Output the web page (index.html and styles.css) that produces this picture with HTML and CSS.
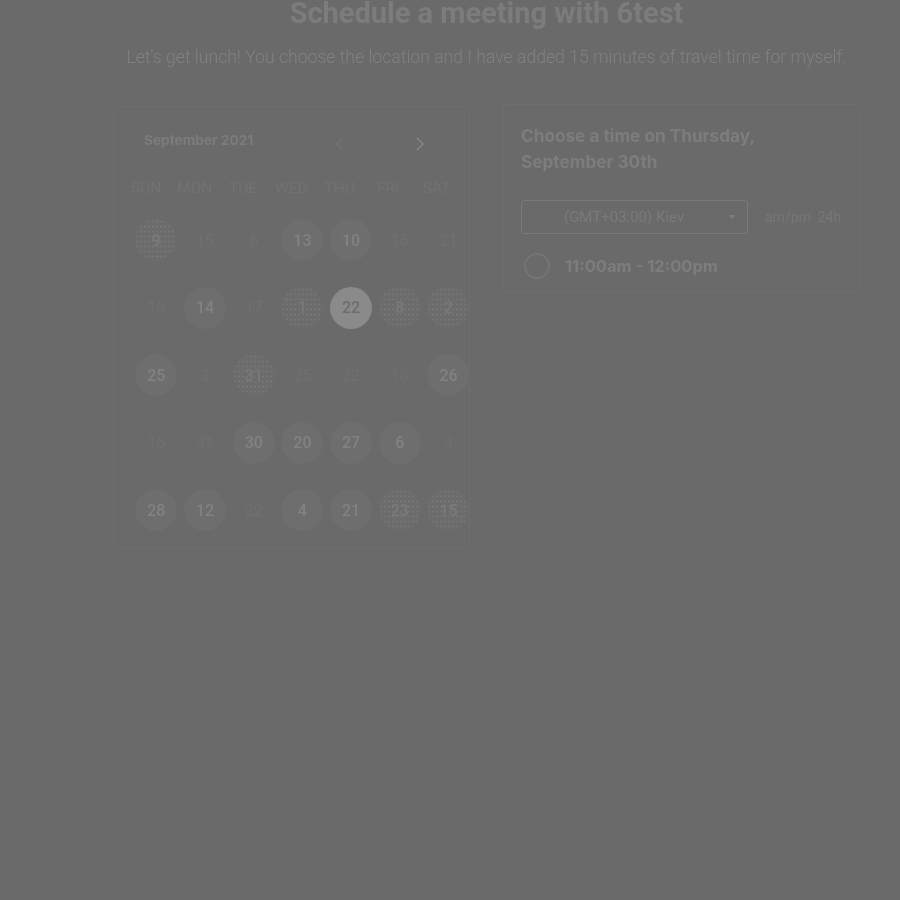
FILE: index.html
```html
<!DOCTYPE html>
<html>
<head>
<meta charset="utf-8">
<link rel="stylesheet" href="styles.css">
</head>
<body>
<main class="page">
  <h1 class="title">Schedule a meeting with 6test</h1>
  <p class="subtitle">Let's get lunch! You choose the location and I have added 15 minutes of travel time for myself.</p>
  <div class="cards">
    <section class="card calendar">
      <div class="cal-head">
        <span class="month">September 2021</span>
        <span class="nav">
          <svg class="chev prev" width="12" height="16" viewBox="0 0 12 16"><path d="M9 2 L3 8 L9 14" fill="none" stroke="currentColor" stroke-width="1.6"/></svg>
          <svg class="chev next" width="12" height="16" viewBox="0 0 12 16"><path d="M3 2 L9 8 L3 14" fill="none" stroke="currentColor" stroke-width="1.6"/></svg>
        </span>
      </div>
      <div class="weekdays">
        <span>SUN</span><span>MON</span><span>TUE</span><span>WED</span><span>THU</span><span>FRI</span><span>SAT</span>
      </div>
      <div class="days">
        <span class="d dots">9</span><span class="d off">15</span><span class="d off">6</span><span class="d on">13</span><span class="d on">10</span><span class="d off">16</span><span class="d off">21</span>
        <span class="d off">16</span><span class="d on">14</span><span class="d off">17</span><span class="d dots">1</span><span class="d sel">22</span><span class="d dots">8</span><span class="d dots">2</span>
        <span class="d on">25</span><span class="d off">3</span><span class="d dots">31</span><span class="d off">25</span><span class="d off">22</span><span class="d off">18</span><span class="d on">26</span>
        <span class="d off">16</span><span class="d off">31</span><span class="d on">30</span><span class="d on">20</span><span class="d on">27</span><span class="d on">6</span><span class="d off">3</span>
        <span class="d on">28</span><span class="d on">12</span><span class="d off">22</span><span class="d on">4</span><span class="d on">21</span><span class="d dots">23</span><span class="d dots">15</span>
      </div>
    </section>
    <section class="card times">
      <h2 class="times-title">Choose a time on Thursday,<br>September 30th</h2>
      <div class="times-body">
        <div class="tz-row">
          <div class="select">
            <span class="select-text">(GMT+03:00) Kiev</span>
            <span class="caret"></span>
          </div>
          <span class="fmt">am/pm&nbsp;&nbsp;24h</span>
        </div>
        <label class="slot">
          <span class="radio"></span>
          <span class="slot-text">11:00am - 12:00pm</span>
        </label>
      </div>
    </section>
  </div>
</main>
</body>
</html>
```
FILE: styles.css
```css
html, body {
  margin: 0;
  padding: 0;
  background: #6a6a6a;
}
body {
  font-family: Roboto, "Liberation Sans", sans-serif;
  color: #7e7e7e;
}
.page {
  width: 747px;
  margin-left: 113px;
  filter: blur(0.4px);
}
.title {
  margin: 0;
  font-size: 29px;
  line-height: 27px;
  font-weight: 700;
  text-align: center;
  color: #7c7c7c;
}
.subtitle {
  margin: 18px -20px 0 -20px;
  font-size: 17.6px;
  line-height: 24px;
  font-weight: 300;
  text-align: center;
  color: #808080;
  white-space: nowrap;
}
.cards {
  margin-top: 35px;
  display: flex;
  gap: 33px;
  align-items: flex-start;
}
.card {
  width: 357px;
  box-sizing: border-box;
  border: 1px solid #6e6e6e;
  border-radius: 3px;
}
.calendar {
  height: 442px;
  padding: 22px 0 0 18px;
  margin-top: 2px;
}
.cal-head {
  display: flex;
  align-items: center;
  height: 22px;
  padding-left: 12px;
}
.month {
  font-family: Inter, "Noto Sans", sans-serif;
  font-weight: 700;
  font-size: 13.7px;
  color: #7c7c7c;
  width: 190px;
}
.nav {
  display: flex;
  gap: 68px;
  margin-top: 7px;
}
.chev.prev { color: #727272; }
.chev.next { color: #858585; }
.weekdays {
  display: grid;
  grid-template-columns: repeat(7, 48.4px);
  margin: 26px 0 0 -10px;
  height: 22px;
  align-items: center;
  font-size: 15.5px;
  color: #727272;
  text-align: center;
}
.days {
  display: grid;
  grid-template-columns: repeat(7, 48.7px);
  row-gap: 25.5px;
  margin-top: 20px;
}
.d {
  width: 42px;
  height: 42px;
  margin: 0 auto;
  border-radius: 50%;
  display: flex;
  align-items: center;
  justify-content: center;
  font-size: 16px;
  font-weight: 500;
}
.d.off {
  color: #707070;
  font-weight: 400;
}
.d.on {
  background: #6e6e6e;
  color: #828282;
}
.d.sel {
  background: #8a8a8a;
  color: #6c6c6c;
}
.d.dots {
  background-color: #6c6c6c;
  background-image: radial-gradient(circle, #777777 0.8px, transparent 1.2px);
  background-size: 4px 5px;
  color: #7a7a7a;
}
.times {
  padding-top: 18px;
}
.times-title {
  margin: 0;
  padding: 0 0 15px 17px;
  font-family: Inter, "Noto Sans", sans-serif;
  font-size: 17.2px;
  line-height: 26px;
  font-weight: 700;
  color: #7d7d7d;
}
.times-body {
  border-top: 1px solid #6d6d6d;
  padding: 9px 0 13px 17px;
}
.tz-row {
  display: flex;
  align-items: center;
  gap: 17px;
}
.select {
  width: 227px;
  height: 34px;
  box-sizing: border-box;
  border: 1px solid #7a7a7a;
  border-radius: 3px;
  display: flex;
  align-items: center;
  position: relative;
}
.select-text {
  margin-left: 42px;
  font-size: 15px;
  color: #7a7a7a;
}
.caret {
  position: absolute;
  right: 12px;
  top: 14px;
  width: 0;
  height: 0;
  border-left: 3.5px solid transparent;
  border-right: 3.5px solid transparent;
  border-top: 4px solid #7e7e7e;
}
.fmt {
  font-size: 14px;
  color: #777777;
}
.slot {
  display: flex;
  align-items: center;
  gap: 15px;
  margin-top: 19px;
  padding-left: 3px;
}
.radio {
  width: 26px;
  height: 26px;
  box-sizing: border-box;
  border: 2px solid #747474;
  border-radius: 50%;
}
.slot-text {
  font-family: Inter, "Noto Sans", sans-serif;
  font-size: 16.5px;
  font-weight: 700;
  color: #7d7d7d;
}
```
